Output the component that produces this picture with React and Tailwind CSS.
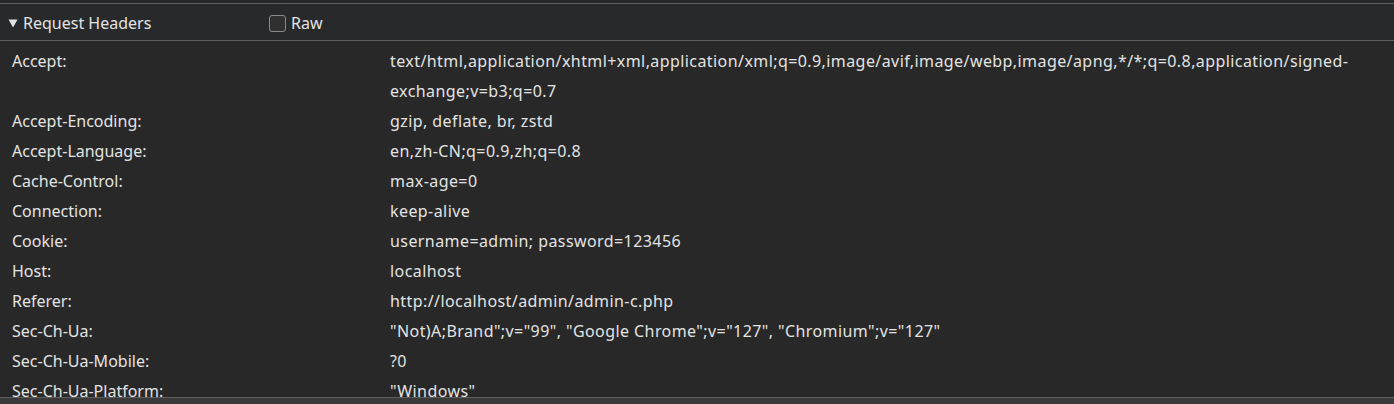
const headers = [
    { name: "Accept", value: ["text/html,application/xhtml+xml,application/xml;q=0.9,image/avif,image/webp,image/apng,*/*;q=0.8,application/signed-", "exchange;v=b3;q=0.7"] },
    { name: "Accept-Encoding", value: ["gzip, deflate, br, zstd"] },
    { name: "Accept-Language", value: ["en,zh-CN;q=0.9,zh;q=0.8"] },
    { name: "Cache-Control", value: ["max-age=0"] },
    { name: "Connection", value: ["keep-alive"] },
    { name: "Cookie", value: ["username=admin; password=123456"] },
    { name: "Host", value: ["localhost"] },
    { name: "Referer", value: ["http://localhost/admin/admin-c.php"] },
    { name: "Sec-Ch-Ua", value: ['"Not)A;Brand";v="99", "Google Chrome";v="127", "Chromium";v="127"'] },
    { name: "Sec-Ch-Ua-Mobile", value: ["?0"] },
    { name: "Sec-Ch-Ua-Platform", value: ['"Windows"'] },
];

export default function App() {
    return (
        <div className="h-[404px] w-[1394px] overflow-hidden bg-[#282828] font-['Noto_Sans',sans-serif] text-[16px] text-[#e3e3e3]">
            <div className="h-[3px]" />
            {/* Section header */}
            <div className="flex h-[38px] items-center border-t border-b border-[#5e5e5e] bg-[#28292b] pt-[2px]">
                <div className="flex w-[269px] items-center pl-[8px]">
                    <svg viewBox="0 0 10 10" className="h-[10px] w-[10px] text-[#e3e3e3]" aria-hidden="true">
                        <path d="M0.5 1.5h9L5 9.5Z" fill="currentColor" />
                    </svg>
                    <span className="ml-[5px]">Request Headers</span>
                </div>
                <span className="h-[17px] w-[17px] rounded-[3px] border border-[#8a8a8a] bg-[#303030]" />
                <span className="ml-[5px]">Raw</span>
            </div>

            {/* Rows */}
            <div className="h-[356px] overflow-hidden pt-[5px]">
                {headers.map((h) => (
                    <div key={h.name} className="flex leading-[30px]">
                        <div className="w-[390px] shrink-0 pl-[12px]">{h.name}:</div>
                        <div className="whitespace-nowrap tracking-[0.42px]">
                            {h.value.map((line) => (
                                <div key={line}>{line}</div>
                            ))}
                        </div>
                    </div>
                ))}
            </div>
            <div className="h-[10px] border-t border-[#5e5e5e] bg-[#3a3a3a]" />
        </div>
    );
}
